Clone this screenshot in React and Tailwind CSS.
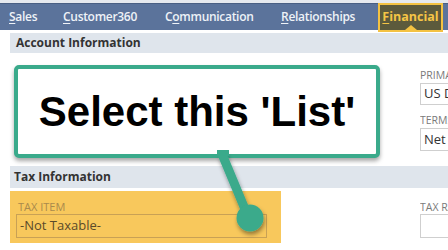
export default function App() {
  const label = "text-[10.5px] leading-[12px] text-[#7a7a7a] uppercase whitespace-nowrap";
  return (
    <div className="relative w-[448px] h-[250px] overflow-hidden bg-white font-['Open_Sans',sans-serif]">
      {/* top strip */}
      <div className="h-[3px] bg-[#e6e9ee]" />
      {/* nav */}
      <nav className="h-[27px] bg-[#5b739b] border-t border-[#4a5f83] flex items-center pl-[9px] text-[12px] tracking-[-0.3px] font-semibold text-[#eef2f7] whitespace-nowrap">
        <span className="w-[54px]"><span className="underline underline-offset-2">S</span>ales</span>
        <span className="w-[102px]"><span className="underline underline-offset-2">C</span>ustomer360</span>
        <span className="w-[116px]">C<span className="underline underline-offset-2">o</span>mmunication</span>
        <span><span className="underline underline-offset-2">R</span>elationships</span>
        <span className="relative ml-auto mr-[5px] h-[29px] w-[65px] flex items-center justify-center border-2 border-[#f4c242] bg-[#5c5a3c] text-[#f5c546] font-bold text-[12.5px] tracking-[0px]">
          <span><span className="underline underline-offset-2">F</span>inancial</span>
          <span className="absolute left-1/2 -translate-x-1/2 bottom-0 w-0 h-0 border-l-[6px] border-r-[6px] border-b-[5px] border-l-transparent border-r-transparent border-b-[#f4c242]" />
        </span>
      </nav>

      <div className="pl-[10px] pt-[3px]">
        {/* Account Information */}
        <div className="h-[20px] bg-[#dfe5ec] flex items-center px-[6px] text-[12px] font-bold text-[#333]">
          Account Information
        </div>
        <div className="flex h-[113px]">
          <div className="w-[410px] shrink-0" />
          <div className="flex-1 min-w-0 flex flex-col pt-[16px] overflow-hidden">
            <div className={label}>Primary Currency</div>
            <div className="mt-[2px] h-[22px] w-[60px] border border-[#cfcfcf] flex items-center px-[3px] text-[13px] text-[#333] whitespace-nowrap overflow-hidden">US Dollar</div>
            <div className={label + " mt-[9px]"}>Terms</div>
            <div className="mt-[2px] h-[23px] w-[60px] border border-[#cfcfcf] flex items-center px-[3px] text-[13px] text-[#333] whitespace-nowrap overflow-hidden">Net 30</div>
          </div>
        </div>

        {/* Tax Information */}
        <div className="h-[22px] bg-[#dfe5ec] flex items-center px-[4px] text-[12px] font-bold text-[#333]">
          Tax Information
        </div>
        <div className="flex mt-[3px]">
          <div className="w-[271px] shrink-0 h-[52px] bg-[#f8c85c] pl-[6px] pr-[14px] pt-[10px]">
            <div className="text-[11px] leading-[12px] uppercase text-[#a98a4c] pl-[2px]">Tax Item</div>
            <div className="mt-[1px] h-[24px] border border-[#c9a155] flex items-center px-[3px] text-[13px] text-[#5a4a2a]">-Not Taxable-</div>
          </div>
          <div className="w-[139px] shrink-0" />
          <div className="flex-1 min-w-0 pt-[10px] overflow-hidden">
            <div className={label}>Tax Rate</div>
            <div className="mt-[1px] h-[24px] w-[60px] border border-[#cfcfcf]" />
          </div>
        </div>
      </div>

      {/* callout annotation */}
      <div className="absolute left-[14px] top-[65px] w-[366px] h-[93px] bg-white border-[4px] border-[#3aaa8b] rounded-[5px] shadow-[0_3px_4px_rgba(0,0,0,0.35)] flex items-center justify-center">
        <span className="font-['Liberation_Sans',Arial,sans-serif] font-bold text-[42px] leading-none text-black">Select this 'List'</span>
      </div>
      <svg className="absolute left-0 top-0 pointer-events-none" width="448" height="250" viewBox="0 0 448 250">
        <defs>
          <filter id="sh" x="-50%" y="-50%" width="200%" height="200%">
            <feDropShadow dx="1" dy="3" stdDeviation="2" floodColor="#000" floodOpacity="0.4" />
          </filter>
        </defs>
        <g filter="url(#sh)">
          <line x1="222" y1="154" x2="247" y2="214" stroke="#3aaa8b" strokeWidth="9" />
          <circle cx="250" cy="218" r="13.5" fill="#3aaa8b" />
        </g>
        <rect x="217" y="150" width="12" height="6" fill="#3aaa8b" />
      </svg>
    </div>
  );
}
